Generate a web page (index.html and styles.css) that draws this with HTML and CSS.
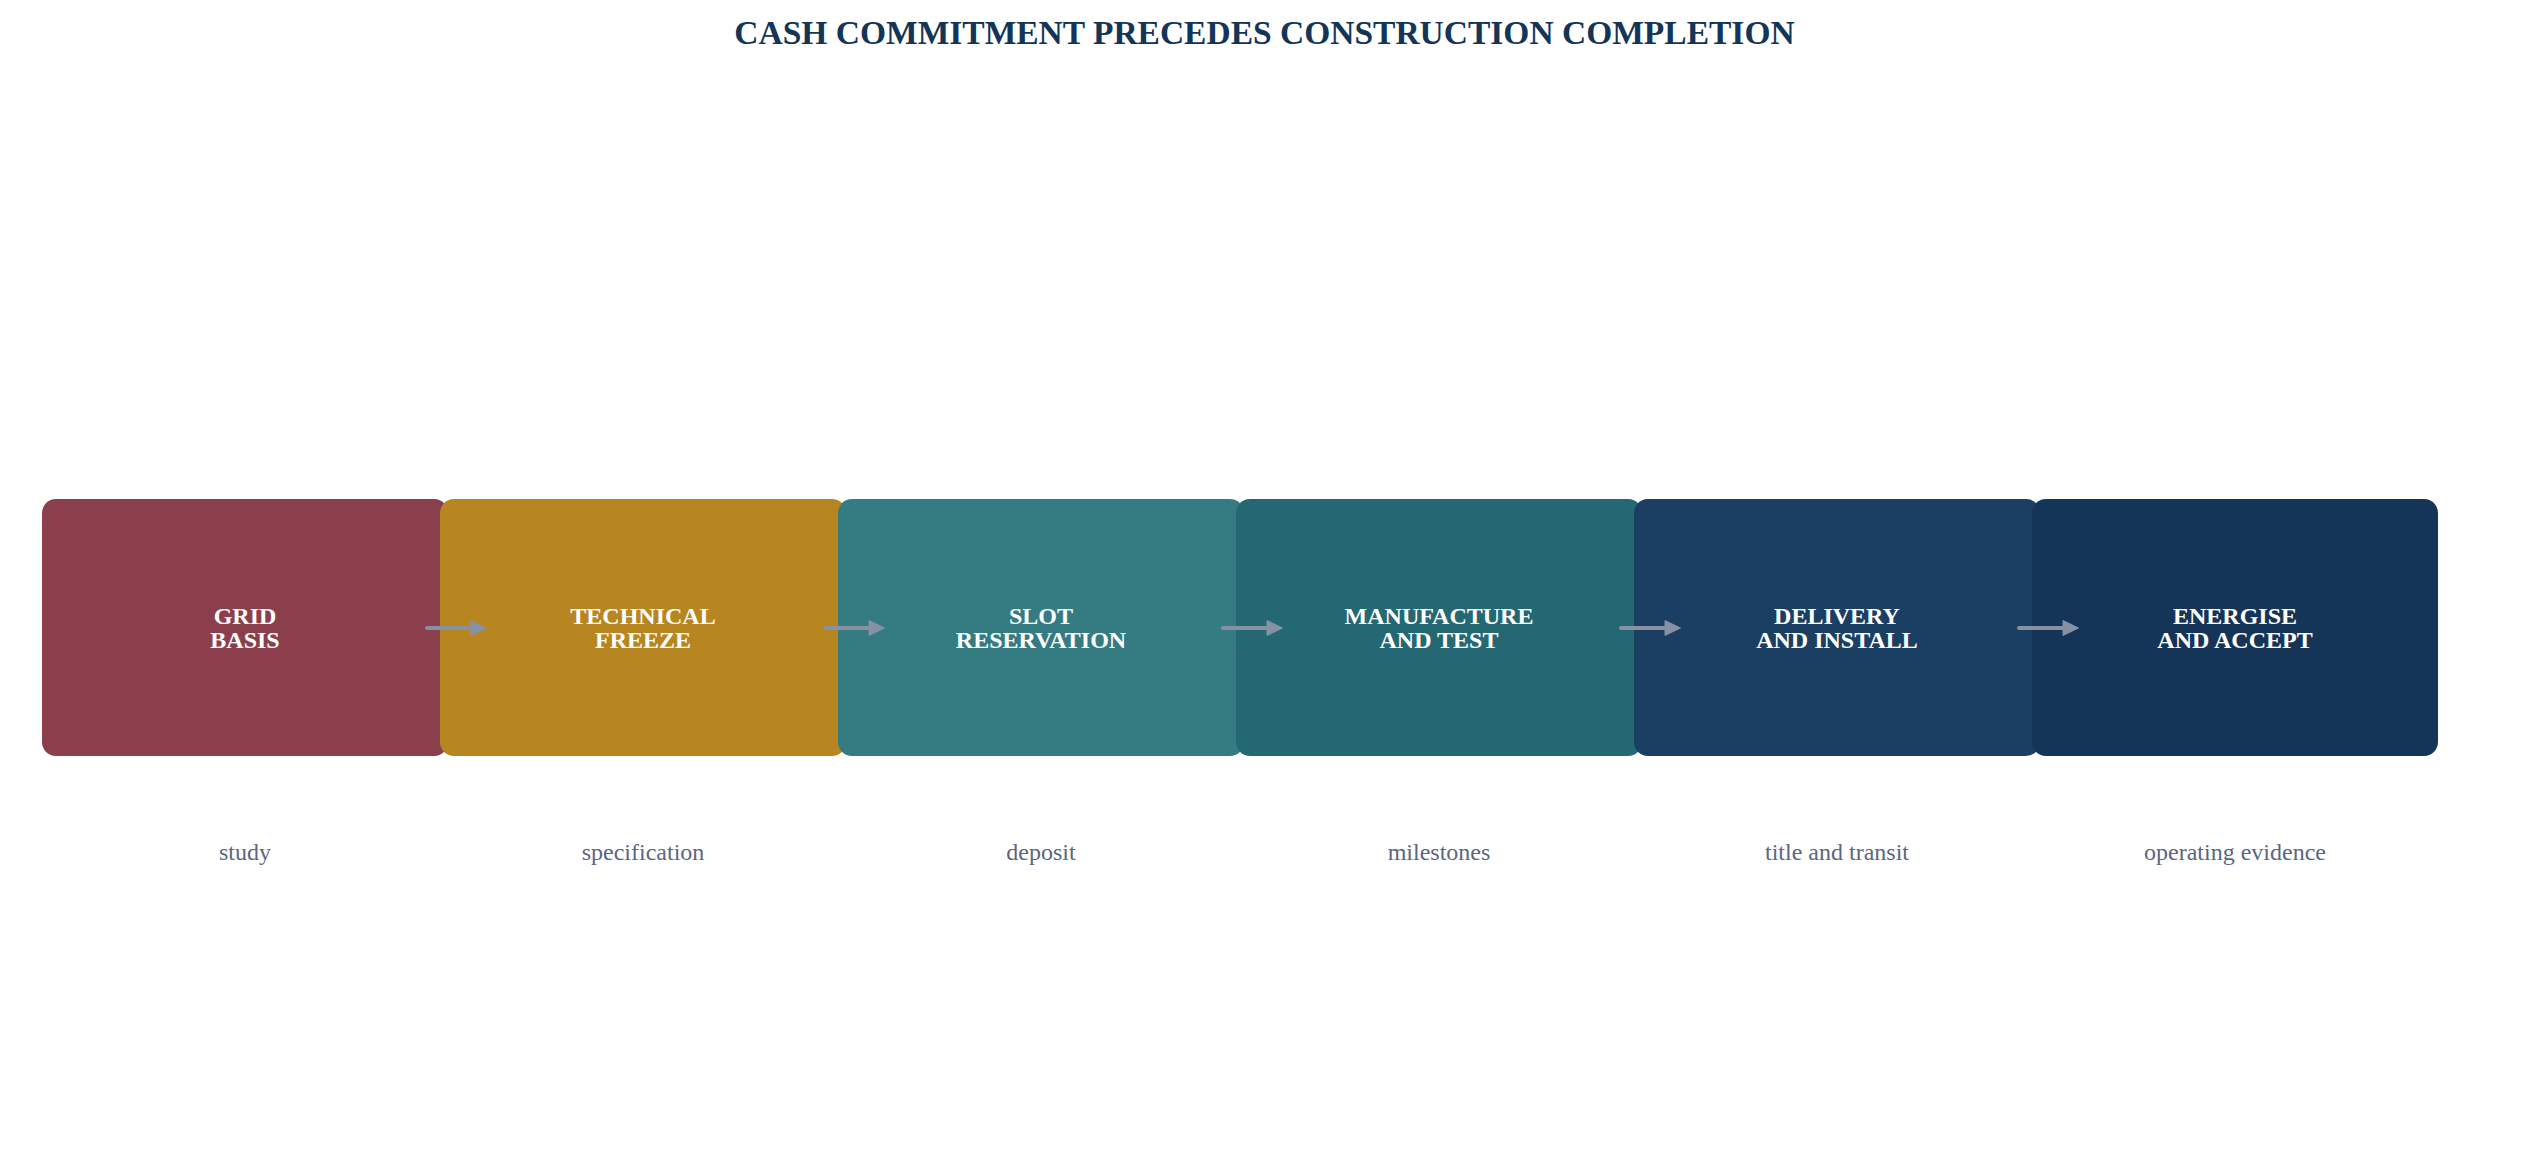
FILE: index.html
```html
<!DOCTYPE html>
<html lang="en">
<head>
<meta charset="utf-8">
<title>Cash commitment precedes construction completion</title>
<link rel="stylesheet" href="styles.css">
</head>
<body>
<main class="page">
  <h1 class="title">CASH COMMITMENT PRECEDES CONSTRUCTION COMPLETION</h1>
  <section class="flow">
    <div class="step">
      <div class="box c1"><span>GRID<br>BASIS</span>
        <svg class="arrow" viewBox="0 0 62 16" width="62" height="16"><line x1="2" y1="8" x2="50" y2="8"/><polygon points="46,0.5 61.5,8 46,15.5"/></svg>
      </div>
      <div class="label">study</div>
    </div>
    <div class="step">
      <div class="box c2"><span>TECHNICAL<br>FREEZE</span>
        <svg class="arrow" viewBox="0 0 62 16" width="62" height="16"><line x1="2" y1="8" x2="50" y2="8"/><polygon points="46,0.5 61.5,8 46,15.5"/></svg>
      </div>
      <div class="label">specification</div>
    </div>
    <div class="step">
      <div class="box c3"><span>SLOT<br>RESERVATION</span>
        <svg class="arrow" viewBox="0 0 62 16" width="62" height="16"><line x1="2" y1="8" x2="50" y2="8"/><polygon points="46,0.5 61.5,8 46,15.5"/></svg>
      </div>
      <div class="label">deposit</div>
    </div>
    <div class="step">
      <div class="box c4"><span>MANUFACTURE<br>AND TEST</span>
        <svg class="arrow" viewBox="0 0 62 16" width="62" height="16"><line x1="2" y1="8" x2="50" y2="8"/><polygon points="46,0.5 61.5,8 46,15.5"/></svg>
      </div>
      <div class="label">milestones</div>
    </div>
    <div class="step">
      <div class="box c5"><span>DELIVERY<br>AND INSTALL</span>
        <svg class="arrow" viewBox="0 0 62 16" width="62" height="16"><line x1="2" y1="8" x2="50" y2="8"/><polygon points="46,0.5 61.5,8 46,15.5"/></svg>
      </div>
      <div class="label">title and transit</div>
    </div>
    <div class="step">
      <div class="box c6"><span>ENERGISE<br>AND ACCEPT</span></div>
      <div class="label">operating evidence</div>
    </div>
  </section>
</main>
</body>
</html>
```

FILE: styles.css
```css
html, body {
  margin: 0;
  padding: 0;
  background: #ffffff;
}

body {
  font-family: "Liberation Serif", "Times New Roman", serif;
}

.page {
  width: 2529px;
  height: 1166px;
  box-sizing: border-box;
  padding-top: 13px;
}

.title {
  margin: 0;
  font-size: 33.5px;
  line-height: 40px;
  font-weight: 700;
  color: #143558;
  text-align: center;
}

.flow {
  display: flex;
  margin-top: 446px;
  padding-left: 42px;
}

.step {
  width: 406px;
  flex: none;
  display: flex;
  flex-direction: column;
  align-items: center;
}

.step + .step {
  margin-left: -8px;
}

.box {
  position: relative;
  width: 100%;
  height: 257px;
  border-radius: 14px;
  display: flex;
  align-items: center;
  justify-content: center;
  text-align: center;
  color: #ffffff;
  font-weight: 700;
  font-size: 24px;
  line-height: 24px;
}

.box span {
  display: block;
}

.c1 { background: #8b3f4d; }
.c2 { background: #b88620; }
.c3 { background: #357c82; }
.c4 { background: #246873; }
.c5 { background: #1a3f63; }
.c6 { background: #143558; }

.arrow {
  position: absolute;
  z-index: 2;
  top: 50%;
  left: calc(100% - 23px);
  margin-top: -8px;
  overflow: visible;
}

.arrow line {
  stroke: #8791a3;
  stroke-width: 4;
  stroke-linecap: round;
}

.arrow polygon {
  fill: #8791a3;
  stroke: #8791a3;
  stroke-width: 1;
  stroke-linejoin: round;
}

.label {
  margin-top: 82px;
  font-size: 24px;
  line-height: 28px;
  color: #5a6680;
  text-align: center;
}
```
